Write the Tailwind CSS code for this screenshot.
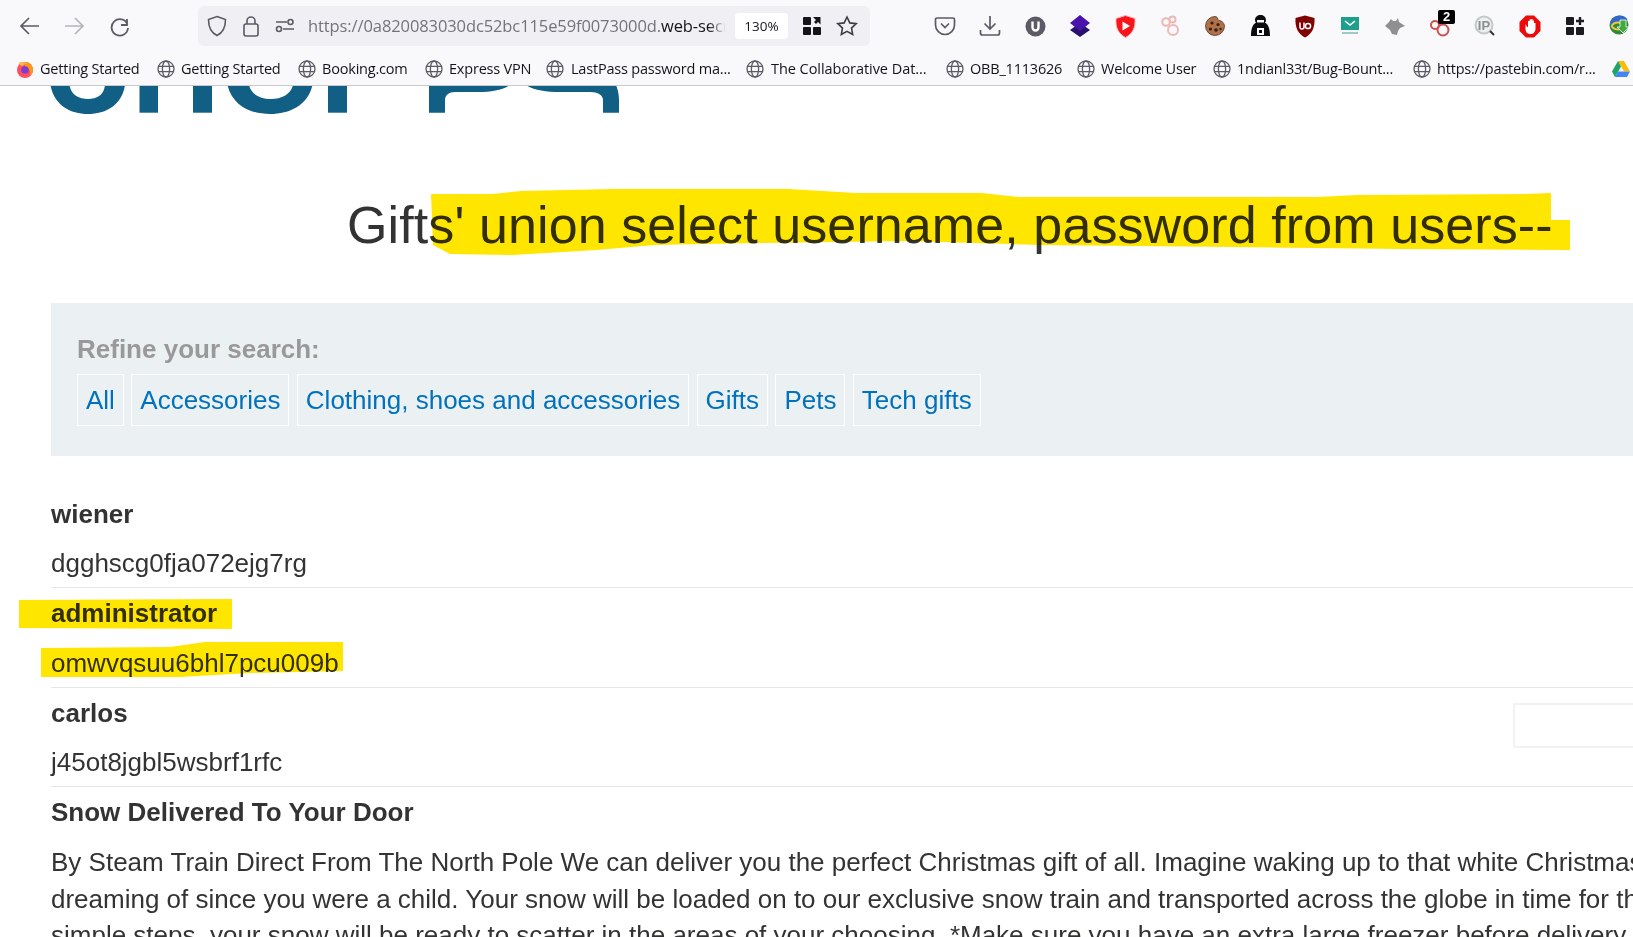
<!DOCTYPE html>
<html lang="en">
<head>
  <meta charset="UTF-8" />
  <title>SQL injection - Gifts</title>
  <script src="https://cdn.jsdelivr.net/npm/@tailwindcss/browser@4"></script>
</head>
<body class="relative h-[937px] w-[1633px] overflow-hidden bg-white font-['Liberation_Sans',sans-serif] text-[#333332]">

<!-- Browser chrome -->
<header class="h-[86px] border-b border-[#c9c9cc] bg-[#f9f9fb] font-['Open_Sans',sans-serif] text-[#15141a]">
  <div class="flex h-[52px] items-center">
    <div class="flex w-[198px] shrink-0 items-center pl-[19px] text-[#5b5b66]">
      <svg class="mr-[22px] h-[20px] w-[22px]" viewBox="0 0 22 20" fill="none" stroke="currentColor" stroke-width="1.7"><path d="M20 10H2M10 2l-8 8 8 8"/></svg>
      <svg class="mr-[24px] h-[20px] w-[22px] text-[#b4b4ba]" viewBox="0 0 22 20" fill="none" stroke="currentColor" stroke-width="1.7"><path d="M2 10h18M12 2l8 8-8 8"/></svg>
      <svg class="h-[22px] w-[22px]" viewBox="0 0 22 22" fill="none" stroke="currentColor" stroke-width="1.8"><path d="M18 4v6h-6M18.5 9.5A8.2 8.2 0 1 0 19 13"/></svg>
    </div>
    <div class="flex h-[40px] w-[672px] shrink-0 items-center rounded-md bg-[#f0f0f4]">
      <svg class="ml-[9px] h-[22px] w-[20px] shrink-0 text-[#5b5b66]" viewBox="0 0 20 22" fill="none" stroke="currentColor" stroke-width="1.6"><path d="M10 1.5 18.5 4.5c0 8-2 13-8.500 16C3.500 17.500 1.500 12.500 1.500 4.500z"/></svg>
      <svg class="ml-[15px] h-[22px] w-[18px] shrink-0 text-[#5b5b66]" viewBox="0 0 18 22" fill="none" stroke="currentColor" stroke-width="1.6"><rect x="2" y="9" width="14" height="12" rx="2"/><path d="M5 9V6a4 4 0 0 1 8 0v3"/></svg>
      <svg class="ml-[15px] h-[16px] w-[20px] shrink-0 text-[#5b5b66]" viewBox="0 0 20 16" fill="none" stroke="currentColor" stroke-width="1.6"><circle cx="4" cy="11" r="2.500"/><path d="M8 11h11M1 4h11"/><circle cx="15.500" cy="4" r="2.500"/></svg>
      <div class="relative ml-[13px] w-[418px] shrink-0 overflow-hidden whitespace-nowrap text-[16.500px] tracking-[-0.1px] text-[#73737b]">https://0a820083030dc52bc115e59f0073000d.<span class="text-[#15141a]">web-security-academy.net</span>
        <div class="absolute inset-y-0 right-0 w-[18px] bg-gradient-to-r from-transparent to-[#f0f0f4]"></div>
      </div>
      <div class="ml-[9px] flex h-[26px] w-[53px] shrink-0 items-center justify-center rounded-[4px] bg-white text-[13.500px]">130%</div>
      <svg class="ml-[14px] h-[20px] w-[20px] shrink-0" viewBox="0 0 20 20" fill="#15141a"><rect x="1" y="1" width="8" height="8" rx="1"/><rect x="1" y="11" width="8" height="8" rx="1"/><rect x="11" y="11" width="8" height="8" rx="1"/><path d="M11 1h7.500v7.500l-2.500-2.500-2 2-2-2 2-2z"/></svg>
      <svg class="ml-[14px] h-[22px] w-[22px] shrink-0 text-[#3d3d45]" viewBox="0 0 22 22" fill="none" stroke="currentColor" stroke-width="1.6"><path d="m11 2 2.800 5.900 6.400.800-4.700 4.400 1.200 6.400-5.700-3.100-5.700 3.100 1.200-6.400L1.800 8.700l6.400-.800z"/></svg>
    </div>
    <!-- extension icons -->
    <div class="ml-[52.500px] flex shrink-0 items-center">
      <div class="flex w-[45px] justify-center"><svg class="h-[22px] w-[22px]" viewBox="0 0 22 22" fill="none" stroke="#5b5b66" stroke-width="1.700"><path d="M3 3h16a1.500 1.500 0 0 1 1.500 1.500V10a9.500 9.500 0 0 1-19 0V4.500A1.500 1.500 0 0 1 3 3z"/><path d="m7 8.500 4 4 4-4"/></svg></div>
      <div class="flex w-[45px] justify-center"><svg class="h-[22px] w-[22px]" viewBox="0 0 22 22" fill="none" stroke="#5b5b66" stroke-width="1.700"><path d="M11 1v13M5.500 8.500 11 14l5.500-5.500M1.500 15v3a2 2 0 0 0 2 2h15a2 2 0 0 0 2-2v-3"/></svg></div>
      <div class="flex w-[45px] justify-center"><svg class="h-[21px] w-[21px]" viewBox="0 0 21 21"><circle cx="10.500" cy="10.500" r="10" fill="#5b5b66"/><path d="M7.500 5.500v6a3 3 0 0 0 6 0v-6" fill="none" stroke="#fff" stroke-width="2.400"/></svg></div>
      <div class="flex w-[45px] justify-center"><svg class="h-[22px] w-[22px]" viewBox="0 0 22 22"><path d="m11 8 10 7-10 7-10-7z" fill="#2a1070"/><path d="m11 0 10 8-10 8L1 8z" fill="#4a12ac"/></svg></div>
      <div class="flex w-[45px] justify-center"><svg class="h-[23px] w-[21px]" viewBox="0 0 21 23"><path d="M10.500.500 20 3.500c.5 9-2 15-9.500 19C3 18.500.5 12.500 1 3.500z" fill="#f9141c" stroke="#ffb3b3"/><path d="M7.500 6.500v9l7.500-4.500z" fill="#fff"/></svg></div>
      <div class="flex w-[45px] justify-center"><svg class="h-[22px] w-[20px]" viewBox="0 0 20 22" fill="none" stroke="#eeb8b8" stroke-width="2"><circle cx="6" cy="7" r="3.800"/><circle cx="12.500" cy="4.500" r="3"/><circle cx="13" cy="15" r="5"/></svg></div>
      <div class="flex w-[45px] justify-center"><svg class="h-[21px] w-[20px]" viewBox="0 0 20 21"><path d="M10 .5c1 0 2 .5 2.500 1.500 0 2 2 3 4 3 1.500 1.500 3 3 3 5.500A9.500 9.500 0 1 1 10 .5z" fill="#b17048" stroke="#4a3326" stroke-width=".8"/><circle cx="7" cy="7" r="1.600" fill="#2f2018"/><circle cx="13" cy="8.500" r="1.600" fill="#2f2018"/><circle cx="5.500" cy="13" r="1.600" fill="#2f2018"/><circle cx="11" cy="14" r="1.800" fill="#2f2018"/><circle cx="15.500" cy="13" r="1.200" fill="#2f2018"/></svg></div>
      <div class="flex w-[45px] justify-center"><svg class="h-[22px] w-[19px]" viewBox="0 0 19 22"><path d="M9.500 0c3 0 5.500 2 5.500 5 0 1-.3 2-1 2.800C16.500 9 19 12 19 21H0C0 12 2.500 9 5 7.800 4.300 7 4 6 4 5c0-3 2.500-5 5.500-5z" fill="#0c0c0d"/><path d="M6 5h7v2.500H6z" fill="#fff"/><rect x="6" y="13" width="7" height="7" fill="#fff"/><rect x="8" y="15" width="3" height="3" fill="#0c0c0d"/></svg></div>
      <div class="flex w-[45px] justify-center"><svg class="h-[23px] w-[20px]" viewBox="0 0 20 23"><path d="M10 .5 19.500 3c.5 9-2 15.500-9.500 19.500C2.500 18.500 0 12 .5 3z" fill="#800000"/><path d="M5 7.500V12a2 2 0 0 0 4 0V7.500" fill="none" stroke="#fff" stroke-width="1.500"/><circle cx="13" cy="11" r="2.600" fill="none" stroke="#fff" stroke-width="1.500"/></svg></div>
      <div class="flex w-[45px] justify-center"><svg class="h-[20px] w-[20px]" viewBox="0 0 20 20"><rect x="1" y="1" width="18" height="13" fill="#1f9e8c"/><path d="m5 5 5 4 5-4" fill="none" stroke="#fff" stroke-width="1.600"/><rect x="2" y="16" width="16" height="2" fill="#9fc9c2"/></svg></div>
      <div class="flex w-[45px] justify-center"><svg class="h-[17px] w-[20px]" viewBox="0 0 20 17"><path d="M0 8 4 4 6 1l2 2h3l2-3 1 4 6 4-5 2-2 3-1 4-5-1-2-4z" fill="#8f8f8f"/></svg></div>
      <div class="relative flex w-[45px] justify-center"><svg class="h-[18px] w-[22px] translate-y-[2px]" viewBox="0 0 22 18" fill="none" stroke="#c9514f" stroke-width="2"><circle cx="6" cy="6" r="4"/><circle cx="14" cy="11" r="5.500"/></svg>
        <span class="absolute top-[-7px] left-[20.500px] flex h-[14px] w-[17px] items-center justify-center rounded-[2px] bg-black font-['Liberation_Sans',sans-serif] text-[13px] font-bold text-white">2</span>
      </div>
      <div class="flex w-[45px] justify-center"><svg class="h-[23px] w-[22px]" viewBox="0 0 22 23"><circle cx="10" cy="10" r="8.500" fill="#eef0f0" stroke="#c3c8c8" stroke-width="2"/><text x="10" y="14.500" text-anchor="middle" font-family="Liberation Sans" font-weight="700" font-size="13" fill="#8b8f90">IP</text><path d="m16 16 4 4" stroke="#333" stroke-width="2"/></svg></div>
      <div class="flex w-[45px] justify-center"><svg class="h-[23px] w-[22px]" viewBox="0 0 22 23"><path d="M7 .5h8L21.500 7v9L15 22.500H7L.5 16V7z" fill="#ed0a0a"/><path d="M6.500 9v5c0 3 2 5 5 5s4.500-2 5-4.500V8h-1.500v3V5.500h-1.500V11V4h-1.500v7V4.500H10.500V11V6H9v6.500L7.500 11z" fill="#fff"/></svg></div>
      <div class="flex w-[45px] justify-center"><svg class="h-[20px] w-[20px]" viewBox="0 0 20 20" fill="#1c1b22"><rect x="1" y="1" width="8" height="8" rx="1"/><rect x="1" y="11" width="8" height="8" rx="1"/><rect x="11" y="11" width="8" height="8" rx="1"/><path d="M13.800 1h2.400v2.800H19v2.400h-2.800V9h-2.400V6.200H11V3.800h2.800z"/></svg></div>
      <div class="flex w-[45px] justify-center"><svg class="h-[24px] w-[22px]" viewBox="0 0 22 24"><circle cx="10" cy="11" r="9.500" fill="#2e8b3a"/><path d="M1 11C1 5 6 1.500 11 1.500c3 0 6 1.500 7.500 4L8 9z" fill="#3467c9"/><ellipse cx="9" cy="12" rx="6" ry="3.500" fill="none" stroke="#f0c83a" stroke-width="2"/><path d="M11 6h6v7h3l-6 6-6-6h3z" fill="#42a83f" stroke="#fff" stroke-width=".8"/></svg></div>
    </div>
  </div>

  <!-- bookmarks -->
  <div class="flex h-[33px] items-center pl-[16px] text-[14.500px] tracking-[-0.2px] whitespace-nowrap">
    <div class="flex w-[141px] items-center gap-[6px]"><svg class="h-[18px] w-[18px]" viewBox="0 0 18 18"><circle cx="9" cy="10" r="8" fill="#ff4f5e"/><path d="M9 2c5 0 8 4 8 8 0 2-1 4-3 5.500 1-4-1-8-5-8z" fill="#ff980e"/><circle cx="9" cy="10" r="3.800" fill="#7b3fd0"/><path d="M3 2c0 2 1 3 3 4L11 3C8 2 5 2 3 2z" fill="#ffbd4f"/></svg>Getting Started</div>
    <div class="flex w-[141px] items-center gap-[6px]"><svg class="h-[18px] w-[18px]" viewBox="0 0 18 18" fill="none" stroke="#5b5b66" stroke-width="1.300"><circle cx="9" cy="9" r="8"/><ellipse cx="9" cy="9" rx="3.600" ry="8"/><path d="M1.500 6.300h15M1.500 11.700h15"/></svg>Getting Started</div>
    <div class="flex w-[127px] items-center gap-[6px]"><svg class="h-[18px] w-[18px]" viewBox="0 0 18 18" fill="none" stroke="#5b5b66" stroke-width="1.300"><circle cx="9" cy="9" r="8"/><ellipse cx="9" cy="9" rx="3.600" ry="8"/><path d="M1.500 6.300h15M1.500 11.700h15"/></svg>Booking.com</div>
    <div class="flex w-[121px] items-center gap-[6px]"><svg class="h-[18px] w-[18px]" viewBox="0 0 18 18" fill="none" stroke="#5b5b66" stroke-width="1.300"><circle cx="9" cy="9" r="8"/><ellipse cx="9" cy="9" rx="3.600" ry="8"/><path d="M1.500 6.300h15M1.500 11.700h15"/></svg>Express VPN</div>
    <div class="flex w-[200px] items-center gap-[7px]"><svg class="h-[18px] w-[18px]" viewBox="0 0 18 18" fill="none" stroke="#5b5b66" stroke-width="1.300"><circle cx="9" cy="9" r="8"/><ellipse cx="9" cy="9" rx="3.600" ry="8"/><path d="M1.500 6.300h15M1.500 11.700h15"/></svg>LastPass password ma...</div>
    <div class="flex w-[200px] items-center gap-[7px] tracking-[-0.05px]"><svg class="h-[18px] w-[18px]" viewBox="0 0 18 18" fill="none" stroke="#5b5b66" stroke-width="1.300"><circle cx="9" cy="9" r="8"/><ellipse cx="9" cy="9" rx="3.600" ry="8"/><path d="M1.500 6.300h15M1.500 11.700h15"/></svg>The Collaborative Dat...</div>
    <div class="flex w-[131px] items-center gap-[6px]"><svg class="h-[18px] w-[18px]" viewBox="0 0 18 18" fill="none" stroke="#5b5b66" stroke-width="1.300"><circle cx="9" cy="9" r="8"/><ellipse cx="9" cy="9" rx="3.600" ry="8"/><path d="M1.500 6.300h15M1.500 11.700h15"/></svg>OBB_1113626</div>
    <div class="flex w-[136px] items-center gap-[6px]"><svg class="h-[18px] w-[18px]" viewBox="0 0 18 18" fill="none" stroke="#5b5b66" stroke-width="1.300"><circle cx="9" cy="9" r="8"/><ellipse cx="9" cy="9" rx="3.600" ry="8"/><path d="M1.500 6.300h15M1.500 11.700h15"/></svg>Welcome User</div>
    <div class="flex w-[200px] items-center gap-[6px]"><svg class="h-[18px] w-[18px]" viewBox="0 0 18 18" fill="none" stroke="#5b5b66" stroke-width="1.300"><circle cx="9" cy="9" r="8"/><ellipse cx="9" cy="9" rx="3.600" ry="8"/><path d="M1.500 6.300h15M1.500 11.700h15"/></svg>1ndianl33t/Bug-Bount...</div>
    <div class="flex w-[199px] items-center gap-[6px]"><svg class="h-[18px] w-[18px]" viewBox="0 0 18 18" fill="none" stroke="#5b5b66" stroke-width="1.300"><circle cx="9" cy="9" r="8"/><ellipse cx="9" cy="9" rx="3.600" ry="8"/><path d="M1.500 6.300h15M1.500 11.700h15"/></svg>https://pastebin.com/r...</div>
    <svg class="h-[16px] w-[18px]" viewBox="0 0 18 16"><path d="M6 0h6l6 10.500h-6z" fill="#fbbc04"/><path d="M6 0 0 10.500 3 16l6-10.500z" fill="#1fa463"/><path d="M3 16h12l3-5.500H6z" fill="#4285f4"/></svg>
  </div>
</header>

<!-- Lab page -->
<main class="text-[26px]">
  <!-- logo, scrolled mostly out of view -->
  <svg class="block h-[34px] w-[640px]" viewBox="0 86 640 34" fill="#115f84">
    <path d="M50.500 85C54 105 70 114 88 114S122 105 125 85H105C104 95 97 99 88 99S71 95 69.500 85Z"/>
    <rect x="139.500" y="85" width="18.500" height="27.700"/>
    <rect x="193" y="85" width="19" height="27.700"/>
    <path d="M227.500 85C232 105 250 114 270 114S308 105 312.500 85H293C291 94 282 99 271 99S251 94 249 85Z"/>
    <rect x="328" y="85" width="19" height="27.700"/>
    <path d="M429 85V112.700H445V100C445 95 449 92 455 92H478C492 92 503 90 510 85Z"/>
    <path d="M526 85C533 90 545 92 560 92H590C598 92 603 95 603 100V112.700H619V100C619 95 618 90 616 85Z"/>
  </svg>

  <h1 class="mt-[74px] ml-[347px] text-[52px] leading-[62px] font-normal tracking-[0.1px] whitespace-nowrap">Gifts' union select username, password from users--</h1>

  <section class="mt-[47px] ml-[51px] h-[153px] bg-[#ebf0f2] pt-[29px] pl-[26px]">
    <div class="leading-[34px] font-bold text-[#999]">Refine your search:</div>
    <nav class="mt-[8px] flex gap-[7.400px] text-[#0071bc]">
      <a class="flex h-[52px] items-center border border-white px-[8px]">All</a>
      <a class="flex h-[52px] items-center border border-white px-[8px]">Accessories</a>
      <a class="flex h-[52px] items-center border border-white px-[8px]">Clothing, shoes and accessories</a>
      <a class="flex h-[52px] items-center border border-white px-[8px]">Gifts</a>
      <a class="flex h-[52px] items-center border border-white px-[8px]">Pets</a>
      <a class="flex h-[52px] items-center border border-white px-[8px]">Tech gifts</a>
    </nav>
  </section>

  <section class="mt-[32.300px] ml-[51px]">
    <div class="flex h-[51.500px] items-center font-bold">wiener</div>
    <div class="flex h-[48.200px] items-center border-b border-[#e6e6e6]">dgghscg0fja072ejg7rg</div>
    <div class="flex h-[51.500px] items-center font-bold">administrator</div>
    <div class="flex h-[48.200px] items-center border-b border-[#e6e6e6]">omwvqsuu6bhl7pcu009b</div>
    <div class="flex h-[51.500px] items-center font-bold">carlos</div>
    <div class="flex h-[48.200px] items-center border-b border-[#e6e6e6]">j45ot8jgbl5wsbrf1rfc</div>
    <div class="flex h-[50px] items-center font-bold">Snow Delivered To Your Door</div>
    <p class="mt-[7px] leading-[36.400px] whitespace-nowrap">By Steam Train Direct From The North Pole We can deliver you the perfect Christmas gift of all. Imagine waking up to that white Christmas you have been<br>dreaming of since you were a child. Your snow will be loaded on to our exclusive snow train and transported across the globe in time for the big day. In a few<br>simple steps, your snow will be ready to scatter in the areas of your choosing. *Make sure you have an extra large freezer before delivery.</p>
  </section>
</main>

<!-- empty box left over from the page's footer widget -->
<div class="absolute top-[703px] left-[1513px] h-[45px] w-[140px] border-2 border-[#f2f2f2]"></div>

<!-- marker scribbles on top of the screenshot -->
<svg class="pointer-events-none absolute top-0 left-0 h-[937px] w-[1633px] mix-blend-multiply" viewBox="0 0 1633 937" fill="#ffe600">
  <path d="M431 194 492 194 521 191 613 189 789 189 856 193 982 193 1019 197 1317 197 1358 195 1526 194 1551 193 1551 220 1570 220 1570 250 1400 249 1233 247 1040 245 906 241 755 243 655 245 596 250 513 255 450 254 433 245z"/>
  <path d="M19 600 232 599 232 629 19 628z"/>
  <path d="M41 648 170 647 205 642 343 642 343 671 250 673 180 677 41 677z"/>
</svg>

</body>
</html>
